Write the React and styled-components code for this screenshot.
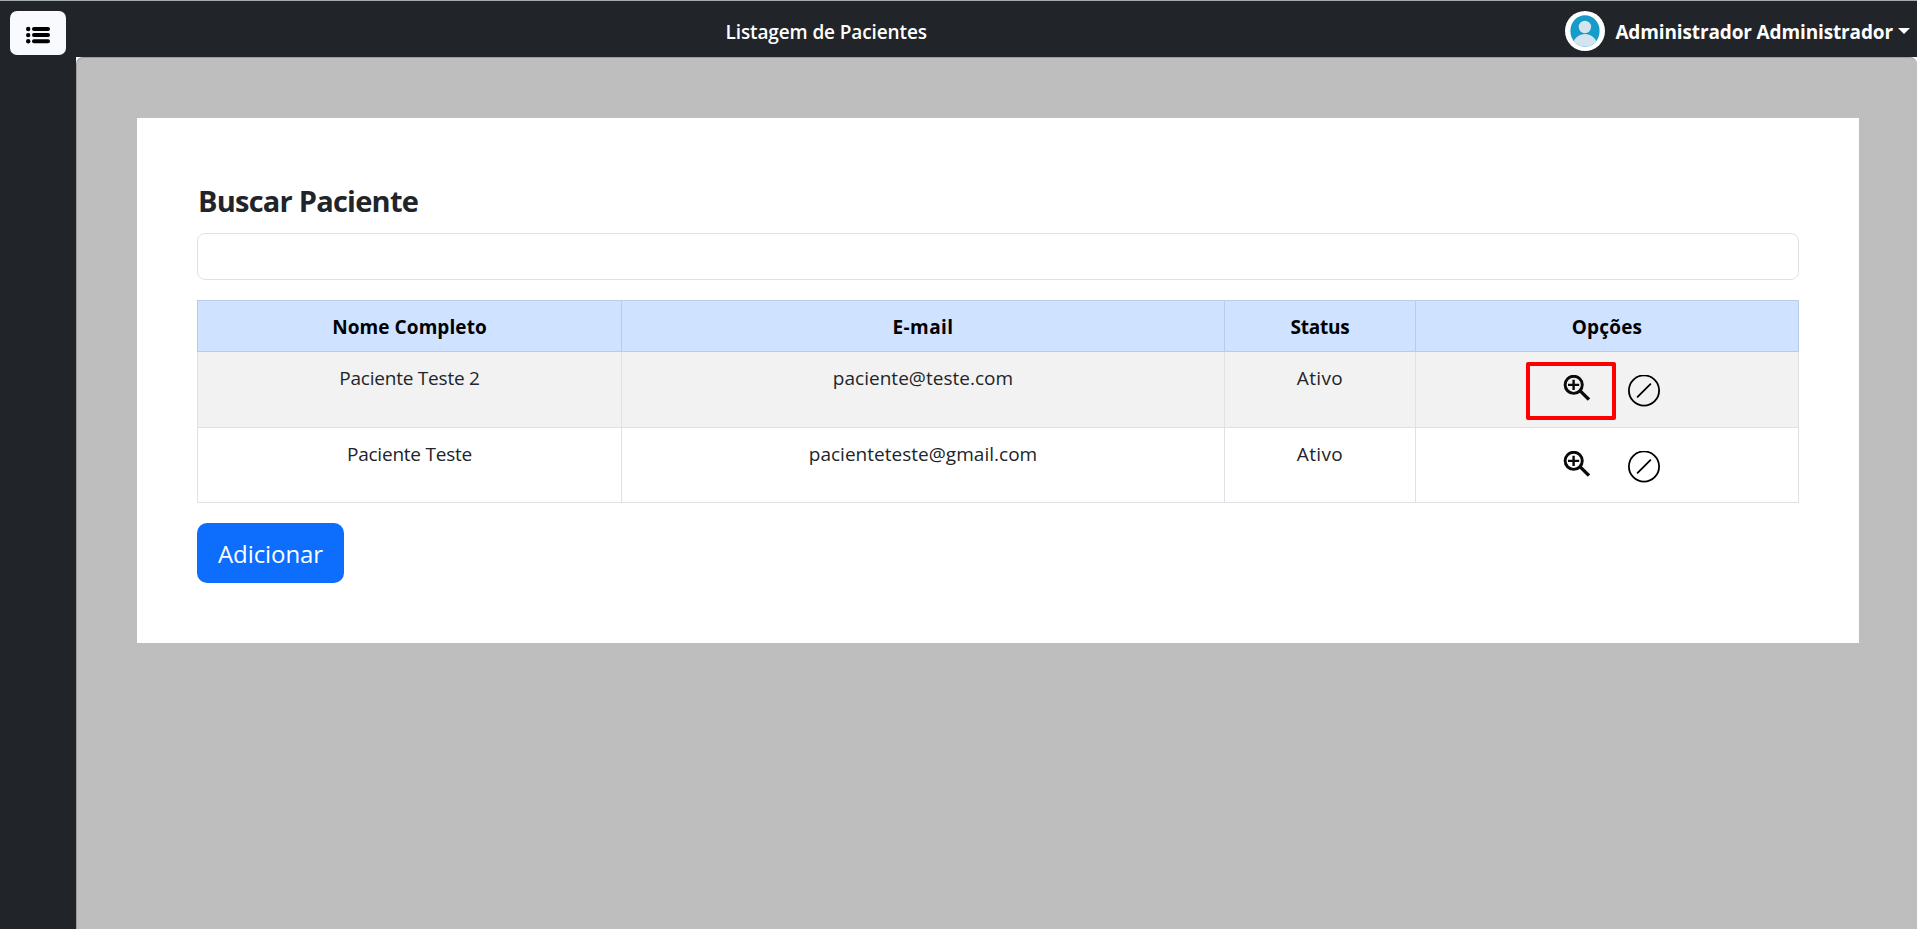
import React from "react";
import styled, { createGlobalStyle } from "styled-components";

const GlobalStyle = createGlobalStyle`
  *, *::before, *::after { box-sizing: border-box; }
  body {
    margin: 0;
    background: #fff;
    color: #212529;
    font-family: "Segoe UI", "Open Sans", "Noto Sans", sans-serif;
    font-size: 19px;
    line-height: 30px;
    overflow: hidden;
  }
`;

const Page = styled.div`
  display: flex;
  flex-direction: column;
  height: 100vh;
`;

const Header = styled.header`
  display: flex;
  flex: none;
  align-items: flex-start;
  height: 57px;
  padding: 10px 7px 0 10px;
  border-top: 1px solid #a4abad;
  background: #212529;
  color: #fff;
`;

const MenuButton = styled.button`
  display: flex;
  align-items: center;
  justify-content: center;
  width: 56px;
  height: 44px;
  padding: 3px 0 0;
  border: 0;
  border-radius: 7px;
  background: #f8fafd;
`;

const PageTitle = styled.div`
  flex: 1;
  padding: 6px 0 0 21px;
  text-align: center;
  font-weight: 600;
  letter-spacing: -0.12px;
`;

const UserMenu = styled.div`
  display: flex;
  align-items: flex-start;
`;

const UserName = styled.span`
  margin: 6px 5px 0 10px;
  font-weight: 700;
  letter-spacing: -0.13px;
`;

const Caret = styled.span`
  margin-top: 17px;
  border: 6px solid transparent;
  border-top-color: #fff;
  border-bottom: 0;
`;

const Body = styled.div`
  display: flex;
  flex: 1;
  min-height: 0;
`;

const Sidebar = styled.aside`
  flex: none;
  width: 76px;
  background: #212529;
`;

const Main = styled.main`
  flex: 1;
  padding: 60px 58px 0 60px;
  border: solid #a09a9e;
  border-width: 1px 0 0 1px;
  border-radius: 7px 7px 0 0;
  background: #bebebe;
`;

const Card = styled.section`
  height: 525px;
  padding: 60px;
  background: #fff;
`;

const Heading = styled.h1`
  margin: 0 0 9px;
  padding-left: 1px;
  font-size: 29px;
  line-height: 46px;
  font-weight: 700;
  letter-spacing: -0.76px;
`;

const SearchInput = styled.input`
  display: block;
  width: 100%;
  height: 47px;
  margin-bottom: 20px;
  padding: 7px 15px;
  border: 1px solid #dee2e6;
  border-radius: 8px;
  background: #fff;
  font: inherit;
`;

const Table = styled.table`
  width: 1602px;
  height: 203px;
  margin-bottom: 20px;
  border-collapse: collapse;
  table-layout: fixed;
`;

const Column = styled.col`
  width: ${(p) => p.$width}px;
`;

const HeadCell = styled.th`
  height: 51px;
  padding: 11px 10px 9px;
  border: 1px solid #bacbe6;
  background: #cfe2ff;
  color: #000;
  font-weight: 700;
  letter-spacing: ${(p) => p.$track || 0}px;
`;

const Row = styled.tr`
  height: ${(p) => p.$height}px;
  background: ${(p) => (p.$striped ? "#f2f2f2" : "#fff")};
`;

const Cell = styled.td`
  padding: 11px 10px 0;
  border: 1px solid #dee2e6;
  vertical-align: top;
  text-align: center;
  letter-spacing: ${(p) => p.$track || 0}px;
`;

const Actions = styled.div`
  display: flex;
  justify-content: center;
  gap: 38px;
  padding: 12px 1px 0 0;
`;

const ActionLink = styled.span`
  position: relative;
  display: block;
  height: 32px;
`;

const Highlight = styled.span`
  position: absolute;
  top: -13px;
  left: -28px;
  width: 90px;
  height: 58px;
  border: 4px solid #f00;
  border-radius: 2px;
`;

const AddButton = styled.button`
  display: block;
  width: 147px;
  height: 60px;
  padding: 1px 0 0;
  border: 0;
  border-radius: 10px;
  background: #0d6efd;
  color: #fff;
  font: inherit;
  font-size: 24px;
  letter-spacing: -0.08px;
`;

const Icon = styled.svg`
  display: block;
`;

const ListIcon = () => (
  <Icon width="24" height="18" viewBox="0 0 24 18">
    {[3, 9.1, 15.2].map((y) => (
      <g key={y}>
        <circle cx="2.2" cy={y} r="2.2" />
        <rect x="6" y={y - 2} width="18" height="4" rx="2" />
      </g>
    ))}
  </Icon>
);

const Avatar = () => (
  <Icon width="40" height="40" viewBox="0 0 40 40">
    <defs>
      <clipPath id="avatar-clip">
        <ellipse cx="20" cy="20" rx="14.6" ry="15.8" />
      </clipPath>
    </defs>
    <circle cx="20" cy="20" r="20" fill="#fff" />
    <g clipPath="url(#avatar-clip)">
      <rect width="40" height="40" fill="#179bc9" />
      <circle cx="19.9" cy="16" r="6.2" fill="#d4e4ef" />
      <ellipse cx="20" cy="35" rx="12.2" ry="12" fill="#d4e4ef" />
    </g>
  </Icon>
);

const ZoomInIcon = () => (
  <Icon width="36" height="27" viewBox="0 0 36 27" fill="none" stroke="#0a0a0a">
    <circle cx="19.7" cy="9.8" r="8.6" strokeWidth="2.9" />
    <path d="M14 9.9h11.2M19.6 4.7v10.4" strokeWidth="2.4" />
    <path d="M25.9 15.6L35 24.6" strokeWidth="3.4" />
  </Icon>
);

const DisableIcon = () => (
  <Icon width="32" height="32" viewBox="0 0 32 32" fill="none" stroke="#000">
    <circle cx="16" cy="15.5" r="15.1" strokeWidth="1.8" />
    <path d="M9.6 21.9L22.4 9.1" strokeWidth="1.8" strokeLinecap="round" />
  </Icon>
);

const columns = [
  { label: "Nome Completo", width: 424, track: 0.08 },
  { label: "E-mail", width: 603, track: 0.4 },
  { label: "Status", width: 191, track: -0.2 },
  { label: "Opções", width: 383, track: 0.2 },
];

const patients = [
  { name: "Paciente Teste 2", email: "paciente@teste.com", status: "Ativo", highlighted: true },
  { name: "Paciente Teste", email: "pacienteteste@gmail.com", status: "Ativo" },
];

export default function App() {
  return (
    <Page>
      <GlobalStyle />
      <Header>
        <MenuButton aria-label="Menu">
          <ListIcon />
        </MenuButton>
        <PageTitle>Listagem de Pacientes</PageTitle>
        <UserMenu>
          <Avatar />
          <UserName>Administrador Administrador</UserName>
          <Caret />
        </UserMenu>
      </Header>
      <Body>
        <Sidebar />
        <Main>
          <Card>
            <Heading>Buscar Paciente</Heading>
            <SearchInput aria-label="Buscar Paciente" />
            <Table>
              <colgroup>
                {columns.map((c) => (
                  <Column key={c.label} $width={c.width} />
                ))}
              </colgroup>
              <thead>
                <tr>
                  {columns.map((c) => (
                    <HeadCell key={c.label} $track={c.track}>
                      {c.label}
                    </HeadCell>
                  ))}
                </tr>
              </thead>
              <tbody>
                {patients.map((p, i) => (
                  <Row key={p.email} $striped={i % 2 === 0} $height={i === 0 ? 76 : 75}>
                    <Cell $track={-0.22}>{p.name}</Cell>
                    <Cell $track={0.02}>{p.email}</Cell>
                    <Cell $track={0.35}>{p.status}</Cell>
                    <Cell>
                      <Actions>
                        <ActionLink>
                          <ZoomInIcon />
                          {p.highlighted && <Highlight />}
                        </ActionLink>
                        <ActionLink>
                          <DisableIcon />
                        </ActionLink>
                      </Actions>
                    </Cell>
                  </Row>
                ))}
              </tbody>
            </Table>
            <AddButton>Adicionar</AddButton>
          </Card>
        </Main>
      </Body>
    </Page>
  );
}
